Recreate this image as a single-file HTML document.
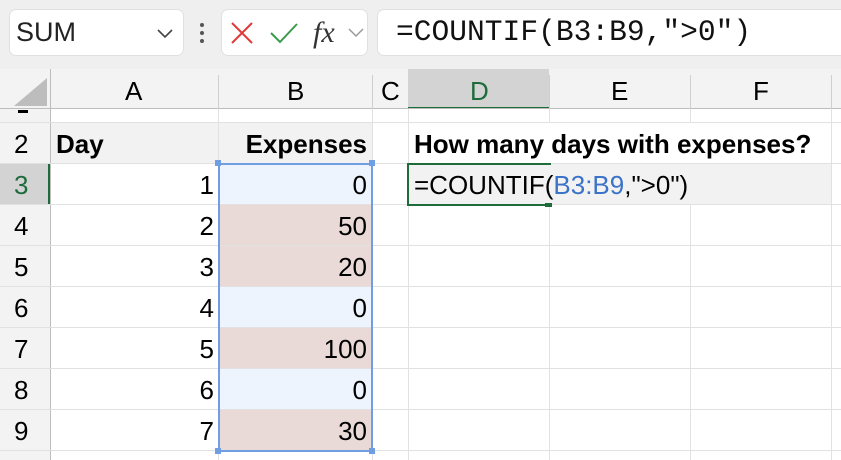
<!DOCTYPE html>
<html><head><meta charset="utf-8"><style>
*{margin:0;padding:0;box-sizing:border-box}
body{width:841px;height:460px;overflow:hidden;background:#fff;font-family:"Liberation Sans",Arial,sans-serif;position:relative}
.a{position:absolute}
.t{position:absolute;font-size:26px;color:#000;line-height:41px;white-space:nowrap}
.hl{position:absolute;height:1px;background:#e1e1e1}
.vl{position:absolute;width:1px;background:#e1e1e1}
</style></head><body>
<div class="a" style="left:0;top:0;width:841px;height:69px;background:#efefef"></div>
<div class="a" style="left:9px;top:9px;width:175px;height:47px;background:#fff;border:1px solid #e0e0e0;border-radius:7px"></div>
<div class="t" style="left:16px;top:12px;font-size:27px;color:#222">SUM</div>
<svg class="a" style="left:155px;top:26px" width="20" height="14"><path d="M3 4 L10 11 L17 4" fill="none" stroke="#444" stroke-width="1.6"/></svg>
<div class="a" style="left:200px;top:23px;width:4px;height:4px;background:#555;border-radius:2px"></div>
<div class="a" style="left:200px;top:31px;width:4px;height:4px;background:#555;border-radius:2px"></div>
<div class="a" style="left:200px;top:39px;width:4px;height:4px;background:#555;border-radius:2px"></div>
<div class="a" style="left:221px;top:9px;width:147px;height:47px;background:#fff;border:1px solid #e0e0e0;border-radius:7px"></div>
<svg class="a" style="left:230px;top:21px" width="24" height="24"><path d="M2 2 L22 22 M22 2 L2 22" stroke="#e03a3a" stroke-width="2"/></svg>
<svg class="a" style="left:269px;top:21px" width="30" height="24"><path d="M2 12 L11 21 L28 3" fill="none" stroke="#3a9a4a" stroke-width="2"/></svg>
<div class="t" style="left:313px;top:12px;font-family:'Liberation Serif',serif;font-style:italic;font-size:30px;color:#333">fx</div>
<svg class="a" style="left:347px;top:27px" width="18" height="12"><path d="M2 2 L9 9 L16 2" fill="none" stroke="#999" stroke-width="1.5"/></svg>
<div class="a" style="left:377px;top:9px;width:470px;height:47px;background:#fff;border:1px solid #e0e0e0;border-radius:7px"></div>
<div class="t" style="left:396px;top:12px;font-family:'Liberation Mono',monospace;font-size:29.6px;color:#111">=COUNTIF(B3:B9,"&gt;0")</div>

<div class="a" style="left:0;top:69px;width:841px;height:40px;background:#f3f3f3"></div>
<div class="a" style="left:408px;top:69px;width:141px;height:40px;background:#d3d3d3;border-bottom:2px solid #1e6b3c"></div>
<svg class="a" style="left:14px;top:78px" width="34" height="30"><path d="M0 28 L33 28 L33 0 Z" fill="#bdbdbd"/></svg>
<div class="vl" style="left:50px;top:69px;height:391px;background:#bdbdbd"></div>
<div class="a" style="left:0;top:108px;width:841px;height:1px;background:#bdbdbd"></div>
<div class="vl" style="left:218px;top:75px;height:34px;background:#cfcfcf"></div>
<div class="vl" style="left:372px;top:75px;height:34px;background:#cfcfcf"></div>
<div class="vl" style="left:549px;top:75px;height:34px;background:#cfcfcf"></div>
<div class="vl" style="left:690px;top:75px;height:34px;background:#cfcfcf"></div>
<div class="vl" style="left:831px;top:75px;height:34px;background:#cfcfcf"></div>
<div class="t" style="left:125px;top:70px;line-height:42px">A</div>
<div class="t" style="left:287px;top:70px;line-height:42px">B</div>
<div class="t" style="left:381px;top:70px;line-height:42px">C</div>
<div class="t" style="left:470px;top:70px;line-height:42px;color:#1e6b3c">D</div>
<div class="t" style="left:611px;top:70px;line-height:42px">E</div>
<div class="t" style="left:753px;top:70px;line-height:42px">F</div>

<div class="a" style="left:0;top:109px;width:50px;height:351px;background:#f3f3f3"></div>
<div class="a" style="left:0;top:164px;width:50px;height:41px;background:#d3d3d3;border-right:2px solid #1e6b3c"></div>
<div class="a" style="left:18px;top:110px;width:10px;height:3px;background:#000"></div>

<div class="a" style="left:51px;top:123px;width:321px;height:41px;background:#f2f2f2"></div>
<div class="a" style="left:408px;top:164px;width:423px;height:41px;background:#f2f2f2"></div>
<div class="a" style="left:219px;top:164px;width:153px;height:287px;background:#eef4fd"></div>
<div class="a" style="left:219px;top:205px;width:153px;height:82px;background:#eadad7"></div>
<div class="a" style="left:219px;top:328px;width:153px;height:41px;background:#eadad7"></div>
<div class="a" style="left:219px;top:410px;width:153px;height:41px;background:#eadad7"></div>

<div class="hl" style="left:0;top:122px;width:841px"></div>
<div class="hl" style="left:0;top:163px;width:841px"></div>
<div class="hl" style="left:0;top:204px;width:841px"></div>
<div class="hl" style="left:0;top:245px;width:841px"></div>
<div class="hl" style="left:0;top:286px;width:841px"></div>
<div class="hl" style="left:0;top:327px;width:841px"></div>
<div class="hl" style="left:0;top:368px;width:841px"></div>
<div class="hl" style="left:0;top:409px;width:841px"></div>
<div class="hl" style="left:0;top:450px;width:841px"></div>
<div class="vl" style="left:218px;top:109px;height:351px"></div>
<div class="vl" style="left:372px;top:109px;height:351px"></div>
<div class="vl" style="left:408px;top:109px;height:351px"></div>
<div class="vl" style="left:549px;top:205px;height:255px"></div>
<div class="vl" style="left:549px;top:109px;height:14px"></div>
<div class="vl" style="left:690px;top:109px;height:14px"></div>
<div class="vl" style="left:690px;top:205px;height:255px"></div>
<div class="vl" style="left:831px;top:109px;height:351px"></div>

<div class="t" style="left:14px;top:124px">2</div>
<div class="t" style="left:14px;top:165px;color:#1e6b3c">3</div>
<div class="t" style="left:14px;top:206px">4</div>
<div class="t" style="left:14px;top:247px">5</div>
<div class="t" style="left:14px;top:288px">6</div>
<div class="t" style="left:14px;top:329px">7</div>
<div class="t" style="left:14px;top:370px">8</div>
<div class="t" style="left:14px;top:411px">9</div>

<div class="t" style="left:56px;top:124px;font-weight:bold">Day</div>
<div class="t" style="right:474px;top:124px;font-weight:bold">Expenses</div>
<div class="t" style="left:414px;top:124px;font-weight:bold">How many days with expenses?</div>

<div class="t" style="right:627px;top:165px">1</div>
<div class="t" style="right:627px;top:206px">2</div>
<div class="t" style="right:627px;top:247px">3</div>
<div class="t" style="right:627px;top:288px">4</div>
<div class="t" style="right:627px;top:329px">5</div>
<div class="t" style="right:627px;top:370px">6</div>
<div class="t" style="right:627px;top:411px">7</div>
<div class="t" style="right:474px;top:165px">0</div>
<div class="t" style="right:474px;top:206px">50</div>
<div class="t" style="right:474px;top:247px">20</div>
<div class="t" style="right:474px;top:288px">0</div>
<div class="t" style="right:474px;top:329px">100</div>
<div class="t" style="right:474px;top:370px">0</div>
<div class="t" style="right:474px;top:411px">30</div>

<div class="a" style="left:218px;top:163px;width:155px;height:289px;border:2px solid #6f9ee3"></div>
<div class="a" style="left:215px;top:160px;width:6px;height:6px;background:#6f9ee3"></div>
<div class="a" style="left:369px;top:160px;width:6px;height:6px;background:#6f9ee3"></div>
<div class="a" style="left:215px;top:448px;width:6px;height:6px;background:#6f9ee3"></div>
<div class="a" style="left:369px;top:448px;width:6px;height:6px;background:#6f9ee3"></div>

<div class="a" style="left:407px;top:163px;width:144px;height:43px;border:2px solid #1e6b3c;border-right:none"></div>
<div class="a" style="left:545px;top:203px;width:7px;height:4px;background:#1e6b3c"></div>
<div class="t" style="left:414px;top:165px">=COUNTIF(<span style="color:#3b73c8">B3:B9</span>,"&gt;0")</div>
</body></html>
